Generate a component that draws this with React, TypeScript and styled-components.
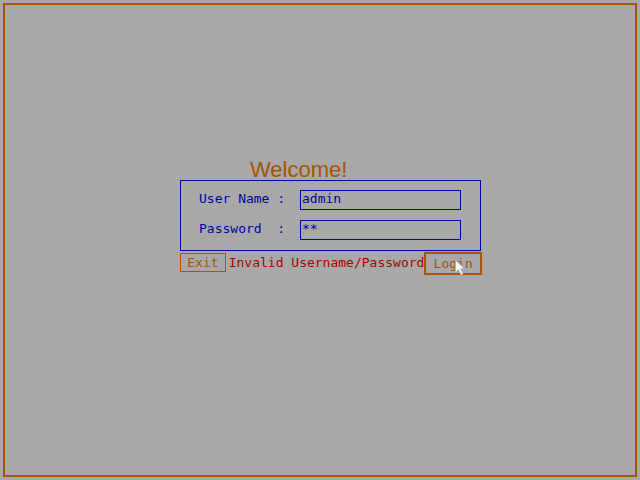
import React from 'react';
import styled, { createGlobalStyle } from 'styled-components';

const GlobalStyle = createGlobalStyle`
  html, body {
    margin: 0;
    padding: 0;
    background: #a8a8a8;
  }
`;

const mono = `'DejaVu Sans Mono', 'Liberation Mono', monospace`;

const Screen = styled.div`
  width: 640px;
  height: 480px;
  box-sizing: border-box;
  padding: 3px;
  background: #a8a8a8;
`;

const Frame = styled.div`
  height: 100%;
  box-sizing: border-box;
  border: 2px solid #a85400;
  padding: 150px 0 0 175px;
  display: flex;
  flex-direction: column;
  align-items: flex-start;
`;

const Title = styled.div`
  margin-left: 70px;
  height: 25px;
  font-family: 'Liberation Sans', Arial, sans-serif;
  font-size: 22px;
  line-height: 29px;
  color: #a85400;
`;

const LoginBox = styled.div`
  width: 301px;
  height: 71px;
  box-sizing: border-box;
  border: 1px solid #0000a8;
  padding: 9px 0 0 18px;
  display: flex;
  flex-direction: column;
  gap: 10px;
`;

const FieldRow = styled.div`
  display: flex;
  align-items: center;
  height: 20px;
`;

const Label = styled.span`
  width: 101px;
  margin-top: -3px;
  font-family: ${mono};
  font-size: 13px;
  color: #0000a8;
  white-space: pre;
`;

const Field = styled.div`
  width: 161px;
  height: 20px;
  box-sizing: border-box;
  border: 1px solid #0000a8;
  padding: 0 1px;
  font-family: ${mono};
  font-size: 13px;
  line-height: 16px;
  color: #0000a8;
  white-space: pre;
`;

const ActionRow = styled.div`
  display: flex;
  align-items: flex-start;
  margin-top: 1px;
  width: 302px;
`;

const Button = styled.div<{ $active?: boolean }>`
  position: relative;
  box-sizing: border-box;
  width: ${(p) => (p.$active ? '58px' : '46px')};
  height: ${(p) => (p.$active ? '23px' : '19px')};
  margin-top: ${(p) => (p.$active ? '0' : '1px')};
  border: ${(p) => (p.$active ? '2px' : '1px')} solid #a85400;
  display: flex;
  align-items: center;
  justify-content: center;
  font-family: ${mono};
  font-size: 13px;
  color: #a85400;
`;

const Message = styled.span`
  flex: 1;
  margin-left: 3px;
  margin-top: 2px;
  font-family: ${mono};
  font-size: 13px;
  line-height: 18px;
  color: #a80000;
  white-space: pre;
`;

const Pointer = styled.svg`
  position: absolute;
  left: 29px;
  top: 6px;
`;

export default function App() {
  return (
    <>
      <GlobalStyle />
      <Screen>
        <Frame>
          <Title>Welcome!</Title>
          <LoginBox>
            <FieldRow>
              <Label>User Name :</Label>
              <Field>admin</Field>
            </FieldRow>
            <FieldRow>
              <Label>Password  :</Label>
              <Field>**</Field>
            </FieldRow>
          </LoginBox>
          <ActionRow>
            <Button>Exit</Button>
            <Message>Invalid Username/Password</Message>
            <Button $active>
              Login
              <Pointer width="11" height="16" viewBox="0 0 11 16">
                <path d="M0.5 0.5 L0.5 12 L3.5 9.5 L6 15 L8 14 L5.5 8.5 L9.5 8.5 Z" fill="#ffffff" stroke="#a8a8a8" strokeWidth="0.6" />
              </Pointer>
            </Button>
          </ActionRow>
        </Frame>
      </Screen>
    </>
  );
}
